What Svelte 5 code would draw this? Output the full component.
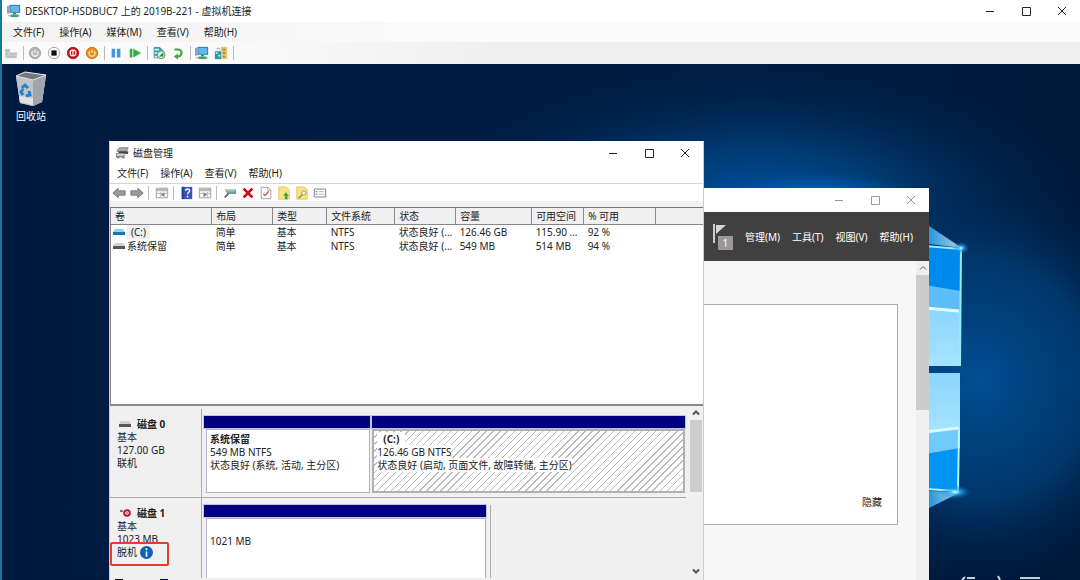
<script>
    const vmMenus = ['文件(F)', '操作(A)', '媒体(M)', '查看(V)', '帮助(H)']
    const diskMenus = ['文件(F)', '操作(A)', '查看(V)', '帮助(H)']
    const serverMenus = ['管理(M)', '工具(T)', '视图(V)', '帮助(H)']

    const vmTools = [
        ['keys'],
        ['turnoff', 'stop', 'shutdown', 'save'],
        ['pause', 'reset'],
        ['checkpoint', 'revert'],
        ['enhanced', 'share'],
        []
    ]
    const diskTools = [
        ['back', 'forward'],
        ['tree'],
        ['help', 'panel'],
        ['connect', 'delete', 'check', 'up', 'search', 'list']
    ]

    const columns = ['卷', '布局', '类型', '文件系统', '状态', '容量', '可用空间', '% 可用', '']
    const volumes = [
        { name: '(C:)', selected: true, cells: ['简单', '基本', 'NTFS', '状态良好 (...', '126.46 GB', '115.90 ...', '92 %', ''] },
        { name: '系统保留', selected: false, cells: ['简单', '基本', 'NTFS', '状态良好 (...', '549 MB', '514 MB', '94 %', ''] }
    ]

    const disks = [
        {
            name: '磁盘 0', size: '127.00 GB', status: '联机', offline: false,
            parts: [
                { title: '系统保留', size: '549 MB NTFS', status: '状态良好 (系统, 活动, 主分区)', share: 167 },
                { title: '(C:)', size: '126.46 GB NTFS', status: '状态良好 (启动, 页面文件, 故障转储, 主分区)', share: 314, active: true }
            ]
        },
        {
            name: '磁盘 1', size: '1023 MB', status: '脱机', offline: true,
            parts: [{ title: '', size: '1021 MB', status: '', share: 284 }]
        }
    ]
</script>

{#snippet icon(name)}
    <svg class="icon" viewBox="0 0 16 16" aria-hidden="true">
        {#if name === 'keys'}
            <path d="M1 3h6v4h8v7H1z" fill="#cfcfcf" />
            <path d="M2 4h4v3H2zM2 8h3v2H2zM7 8h3v2H7zM11 8h3v2h-3zM3 11h10v2H3z" fill="#bababa" />
        {:else if name === 'turnoff'}
            <circle cx="8" cy="8" r="6.5" fill="#b4b4b4" stroke="#a2a2a2" />
            <path d="M5.5 5.8a3.4 3.4 0 1 0 5 0M8 4v4" fill="none" stroke="#eee" stroke-width="1.4" />
        {:else if name === 'stop'}
            <circle cx="8" cy="8" r="6.5" fill="#fdfdfd" stroke="#9a9a9a" />
            <path d="M5 5h6v6H5z" fill="#111" />
        {:else if name === 'shutdown'}
            <circle cx="8" cy="8" r="6.5" fill="#c3191c" stroke="#a50d10" />
            <circle cx="8" cy="8" r="3.3" fill="none" stroke="#fff" stroke-width="1.3" />
            <path d="M8 5.5v5" stroke="#fff" stroke-width="1.3" />
        {:else if name === 'save'}
            <circle cx="8" cy="8" r="6.5" fill="#e88b17" stroke="#ca7208" />
            <path d="M5.5 6a3.4 3.4 0 1 0 5 0M8 4v4" fill="none" stroke="#ffe9b8" stroke-width="1.4" />
        {:else if name === 'pause'}
            <path d="M3 3h4v10H3zM9 3h4v10H9z" fill="#4a94da" />
        {:else if name === 'reset'}
            <path d="M2 3h3v10H2zM6 3l9 5-9 5z" fill="#35ae45" />
        {:else if name === 'checkpoint'}
            <path d="M2 1h7l4 4v9H2z" fill="#3f9dae" />
            <path d="M3 3h5v2H3zM3 7h3v2H3zM3 11h3v2H3z" fill="#c7eef0" />
            <circle cx="10.5" cy="10" r="4.5" fill="#dcece0" stroke="#558a65" />
            <path d="M8 12l5-5v5z" fill="#2c8c44" />
        {:else if name === 'revert'}
            <path d="M4 4h4a4 4 0 0 1 0 8H6" fill="none" stroke="#44a548" stroke-width="2.5" />
            <path d="M3 12l5-3.5v7z" fill="#44a548" />
        {:else if name === 'enhanced' || name === 'vm'}
            <path d="M3 1h12v9H3z" fill="#2374ad" />
            <path d="M4 2h10v7H4z" fill="#60b9e8" />
            <path d="M0 2h3v9H0z" fill="#8da2ac" />
            <path d="M7 10h3v2H7z" fill="#567" />
            <path d="M4 12h9v3H4z" fill="#39a668" />
            <path d="M1 13h3v1H1zM13 13h2v1h-2z" fill="#777" />
        {:else if name === 'share'}
            <path d="M8 1h7v14H8z" fill="#eac66e" />
            <path d="M10 3h3v2h-3zM10 7h3v2h-3zM10 11h3v2h-3z" fill="#a78337" />
            <path d="M1 6h7v9H1z" fill="#2d94ad" />
            <path d="M2 7h2v2H2zM5 10h2v2H5z" fill="#d3f0ea" />
            <path d="M3 4l2-2 2 2" fill="none" stroke="#3a9a5b" />
        {:else if name === 'back'}
            <path d="M1 8l6-5.5v3h8v5H7v3z" fill="#999" stroke="#777" />
        {:else if name === 'forward'}
            <path d="M15 8L9 2.500v3H1v5h8v3z" fill="#999" stroke="#777" />
        {:else if name === 'tree' || name === 'panel'}
            <path d="M1.500 2.500h13v11h-13z" fill="#fafafa" stroke="#969696" />
            <path d="M2 3h12v3H2z" fill="#b6b6b6" />
            <path d="M2 8.500h12M6.500 7v6M10.500 7v6" stroke="#aaa" />
            {#if name === 'tree'}
                <path d="M7 10l3-2v4z" fill="#666" />
            {:else}
                <path d="M10 10L7 8v4z" fill="#666" />
            {/if}
        {:else if name === 'help'}
            <path d="M2 1h12v14H2z" fill="#3c55b5" />
            <path d="M2 1h2v14H2z" fill="#23388b" />
            <path d="M6.500 5.500c0-3 4.500-2.500 4.500 0 0 1.800-2.300 1.700-2.300 4" fill="none" stroke="#fff" stroke-width="1.600" />
            <circle cx="8.700" cy="12" r="1" fill="#fff" />
        {:else if name === 'connect'}
            <path d="M2 4h13v5H5z" fill="#7b98a7" />
            <path d="M4 5h10v1H4z" fill="#c8dce3" />
            <path d="M6 9l-4 4" stroke="#4c6470" stroke-width="2" />
        {:else if name === 'delete'}
            <path d="M3 3l10 10M13 3L3 13" stroke="#c50d12" stroke-width="3.200" />
        {:else if name === 'check'}
            <path d="M2.500 1.500h8l3 3v10h-11z" fill="#fff" stroke="#999" />
            <path d="M10 1v4h4" fill="none" stroke="#aaa" />
            <path d="M5 9l2 2 4-5" fill="none" stroke="#d34949" stroke-width="1.500" />
        {:else if name === 'up' || name === 'search'}
            <path d="M2 1h8l4 3v11H2z" fill="#f6e681" stroke="#ddca65" />
            {#if name === 'up'}
                <path d="M10 7l4 4h-2v4H9v-4H7z" fill="#43a73b" />
            {:else}
                <circle cx="10" cy="8" r="2.500" fill="#fff8cd" stroke="#a89453" />
                <path d="M8 10l-4 4" stroke="#a89453" stroke-width="2" />
            {/if}
        {:else if name === 'list'}
            <path d="M1.500 3.500h13v9h-13z" fill="#fff" stroke="#777" />
            <path d="M3 6.500h2M3 9.500h2" stroke="#555" />
            <path d="M7 6.500h6M7 9.500h6" stroke="#aaa" />
        {:else if name === 'diskmgmt'}
            <path d="M5 2h10l-2 4H2z" fill="#a7b0b0" stroke="#777" />
            <path d="M4 6h11v3H4z" fill="#444" />
            <path d="M1 8h10v5H1z" fill="#888" />
            <path d="M2 9h8v2H2z" fill="#ddd" />
            <path d="M2 13h3v1H2zM8 13h3v1H8z" fill="#333" />
        {/if}
    </svg>
{/snippet}

{#snippet drive(color)}
    <svg class="drive" viewBox="0 0 12 8" aria-hidden="true">
        <path d="M2 1h8l2 3H0z" fill={color === 'blue' ? '#8ed3ef' : '#cfcfcf'} />
        <path d="M0 4h12v3H0z" fill={color === 'blue' ? '#1578ac' : '#565656'} />
    </svg>
{/snippet}

{#snippet controls()}
    <div class="controls">
        <button aria-label="最小化"><svg viewBox="0 0 10 10"><path d="M1 5.500h8" /></svg></button>
        <button aria-label="最大化"><svg viewBox="0 0 10 10"><path d="M1.500 1.500h8v8h-8z" /></svg></button>
        <button aria-label="关闭"><svg viewBox="0 0 10 10"><path d="M1 1l8 8M9 1L1 9" /></svg></button>
    </div>
{/snippet}

{#snippet menu(items)}
    <nav class="menu">
        {#each items as item}
            <button>{item}</button>
        {/each}
    </nav>
{/snippet}

{#snippet toolbar(groups)}
    <div class="toolbar">
        {#each groups as group, i}
            {#if i > 0}<span class="sep"></span>{/if}
            {#each group as name}
                <button aria-label={name}>{@render icon(name)}</button>
            {/each}
        {/each}
    </div>
{/snippet}

{#snippet chevron(down)}
    <svg class="chevron" viewBox="0 0 8 8" aria-hidden="true">
        <path d={down ? 'M1 2.500l3 3 3-3' : 'M1 5.500l3-3 3 3'} />
    </svg>
{/snippet}

<div class="vm">
    <header class="titlebar">
        {@render icon('vm')}
        <h1>DESKTOP-HSDBUC7 上的 2019B-221 - 虚拟机连接</h1>
        {@render controls()}
    </header>
    {@render menu(vmMenus)}
    {@render toolbar(vmTools)}

    <main class="desktop">
        <svg class="wallpaper" viewBox="2 64 1078 516" preserveAspectRatio="none" aria-hidden="true">
            <defs>
                <linearGradient id="base" x1="0" y1="0" x2="1" y2="0">
                    <stop offset="0" stop-color="#001b3f" />
                    <stop offset="0.35" stop-color="#001c42" />
                    <stop offset="0.7" stop-color="#001d42" />
                    <stop offset="1" stop-color="#001a3c" />
                </linearGradient>
                <radialGradient id="beam">
                    <stop offset="0" stop-color="#0055a8" />
                    <stop offset="0.4" stop-color="#00427e" stop-opacity="0.8" />
                    <stop offset="1" stop-color="#002550" stop-opacity="0" />
                </radialGradient>
                <radialGradient id="glow">
                    <stop offset="0" stop-color="#004f94" />
                    <stop offset="0.6" stop-color="#003d74" stop-opacity="0.8" />
                    <stop offset="1" stop-color="#002550" stop-opacity="0" />
                </radialGradient>
                <radialGradient id="peak">
                    <stop offset="0" stop-color="#0064cc" />
                    <stop offset="1" stop-color="#0055a8" stop-opacity="0" />
                </radialGradient>
                <radialGradient id="spark">
                    <stop offset="0" stop-color="#e8ffff" />
                    <stop offset="0.3" stop-color="#39bbff" stop-opacity="0.8" />
                    <stop offset="1" stop-color="#0070d0" stop-opacity="0" />
                </radialGradient>
                <linearGradient id="pane" x1="0" y1="0" x2="0" y2="1">
                    <stop offset="0" stop-color="#8ad6fd" />
                    <stop offset="1" stop-color="#a6e3ff" />
                </linearGradient>
                <linearGradient id="ray" x1="0" y1="0" x2="1" y2="0">
                    <stop offset="0" stop-color="#2fb0ff" />
                    <stop offset="1" stop-color="#d8fbff" />
                </linearGradient>
            </defs>
            <rect x="2" y="64" width="1078" height="516" fill="url(#base)" />
            <ellipse cx="760" cy="205" rx="330" ry="140" fill="url(#beam)" />
            <ellipse cx="980" cy="380" rx="190" ry="200" fill="url(#glow)" />
            <ellipse cx="820" cy="194" rx="90" ry="22" fill="url(#peak)" />
            <path d="M929 226l33 22-33-4z" fill="url(#ray)" opacity="0.8" />
            <path d="M925 246l36 3v117h-36z" fill="#0089ed" />
            <path d="M925 285l36 6v20l-36-3z" fill="#5dbdf8" />
            <path d="M925 308l36 3v55h-36z" fill="url(#pane)" />
            <path d="M925 308l34 3" stroke="#e3fbff" stroke-width="3" />
            <path d="M925 246l36 3-1 117" fill="none" stroke="#91ecff" stroke-width="2" />
            <path d="M925 373h35l-2 118-33-2z" fill="#0094f3" />
            <path d="M925 373h35v75l-35 6z" fill="#70cafa" />
            <path d="M925 373h35v55l-35 4z" fill="url(#pane)" />
            <path d="M925 432l33-4" stroke="#dffaff" stroke-width="3" />
            <path d="M925 489l33 2 1-63" fill="none" stroke="#b7f8ff" stroke-width="2" />
            <path d="M929 491l32 1-32 16z" fill="url(#ray)" opacity="0.8" />
            <ellipse cx="961" cy="248" rx="8" ry="6" fill="url(#spark)" />
            <ellipse cx="955" cy="492" rx="16" ry="7" fill="url(#spark)" />
            <path d="M965 577l-3 3M967 578h8M998 576l2 4M1020 578h20" stroke="#c5d2de" stroke-width="2" />
        </svg>

        <a href="#recycle" class="shortcut">
            <svg viewBox="0 0 32 36" aria-hidden="true">
                <path d="M1 5l9-4 21 3-4 27-9 4-13-3z" fill="#d2d6d9" />
                <path d="M1 5l17 4 13-5-4 27-9 4-13-3z" fill="#bfc4c8" />
                <path d="M18 9l13-5-4 27-9 4z" fill="#9fa6ac" />
                <path d="M1 5l9-4 21 3-13 5z" fill="#72797e" stroke="#e6e6e6" />
                <path d="M4 25l14 2v7L5 31z" fill="#e1e3e4" />
                <path d="M7 17l3-3 3 3M14 20l1 4-4 1M8 24l-2-3 2-3" fill="none" stroke="#1d84d3" stroke-width="3" />
            </svg>
            <span>回收站</span>
        </a>

        <section class="window server">
            <div class="titlebar">{@render controls()}</div>
            <div class="banner">
                <div class="flag">
                    <svg viewBox="0 0 14 20" aria-hidden="true">
                        <path d="M1 0h2v19H1z" fill="#ccc" />
                        <path d="M4 1h10L4 10z" fill="#d5d5d5" />
                    </svg>
                    <span class="badge">1</span>
                </div>
                {@render menu(serverMenus)}
            </div>
            <div class="server-body">
                <div class="welcome"><button>隐藏</button></div>
                <div class="scroll">
                    {@render chevron(false)}
                    <div class="thumb"></div>
                </div>
            </div>
        </section>

        <section class="window disk-window">
            <div class="titlebar">
                {@render icon('diskmgmt')}
                <h2>磁盘管理</h2>
                {@render controls()}
            </div>
            {@render menu(diskMenus)}
            {@render toolbar(diskTools)}

            <div class="volumes">
                <table>
                    <thead>
                        <tr>
                            {#each columns as column}
                                <th>{column}</th>
                            {/each}
                        </tr>
                    </thead>
                    <tbody>
                        {#each volumes as volume}
                            <tr>
                                <td class="volume">
                                    <div class="name">
                                        {@render drive(volume.selected ? 'blue' : 'gray')}
                                        <span class:selected={volume.selected}>{volume.name}</span>
                                    </div>
                                </td>
                                {#each volume.cells as cell}
                                    <td>{cell}</td>
                                {/each}
                            </tr>
                        {/each}
                    </tbody>
                </table>
            </div>

            <div class="graph">
                <div class="disks">
                    {#each disks as disk}
                        <div class="disk">
                            <div class="disk-info">
                                <div class="disk-name">
                                    {#if disk.offline}
                                        <svg class="drive" viewBox="0 0 12 8" aria-hidden="true">
                                            <path d="M1 1h3v2H1z" fill="#777" />
                                            <circle cx="8" cy="4" r="2.800" fill="#fff" stroke="#bd1738" stroke-width="2" />
                                            <path d="M8 3v2" stroke="#bd1738" />
                                        </svg>
                                    {:else}
                                        {@render drive('gray')}
                                    {/if}
                                    <b>{disk.name}</b>
                                </div>
                                <p>基本</p>
                                <p>{disk.size}</p>
                                <p class="status" class:marked={disk.offline}>
                                    {disk.status}
                                    {#if disk.offline}
                                        <svg class="info" viewBox="0 0 12 12" aria-hidden="true">
                                            <circle cx="6" cy="6" r="6" fill="#0d62b3" />
                                            <path d="M6 2v2M6 5v5" stroke="#fff" stroke-width="1.500" />
                                        </svg>
                                    {/if}
                                </p>
                            </div>
                            <div class="parts">
                                {#each disk.parts as part}
                                    <div class="part" class:active={part.active} class:raw={disk.offline} style="width: {part.share / 484 * 100}%">
                                        <div class="part-bar"></div>
                                        <div class="part-body">
                                            <p><b>{part.title}</b></p>
                                            <p><span>{part.size}</span></p>
                                            <p><span>{part.status}</span></p>
                                        </div>
                                    </div>
                                {/each}
                            </div>
                        </div>
                    {/each}
                </div>
                <div class="scroll">
                    {@render chevron(false)}
                    <div class="thumb"></div>
                    {@render chevron(true)}
                </div>
            </div>
            <div class="legend"><i></i><i></i></div>
        </section>
    </main>
</div>

<style>
    :global(body) {
        margin: 0;
    }
    .vm {
        display: flex;
        flex-direction: column;
        box-sizing: border-box;
        height: 100vh;
        border-left: 2px solid #14799c;
        overflow: hidden;
        background: #fff;
        color: #222;
        font-family: "Noto Sans", "Noto Sans CJK SC", sans-serif;
        font-size: 10px;
        line-height: 14px;
    }
    button {
        margin: 0;
        padding: 0;
        border: 0;
        background: none;
        color: inherit;
        font: inherit;
        white-space: nowrap;
    }
    h1, h2, p {
        margin: 0;
        font-size: 10px;
        font-weight: normal;
    }
    svg {
        display: block;
    }
    .icon {
        flex: none;
        width: 14px;
        height: 14px;
    }
    .titlebar {
        display: flex;
        flex: none;
        align-items: center;
        gap: 4px;
        height: 22px;
        padding-left: 5px;
        background: #fff;
    }
    .controls {
        display: flex;
        margin-left: auto;
    }
    .controls button {
        display: flex;
        justify-content: center;
        width: 36px;
    }
    .controls svg {
        width: 10px;
        height: 10px;
        fill: none;
        stroke: #222;
    }
    .menu {
        display: flex;
        flex: none;
        align-items: center;
        gap: 12px;
        height: 20px;
        padding-left: 7px;
    }
    .vm > .menu {
        gap: 15px;
        padding-left: 11px;
        background: linear-gradient(90deg, #f2f2f2, #fafafa 40%);
    }
    .toolbar {
        display: flex;
        flex: none;
        align-items: center;
        gap: 4px;
        height: 17px;
        padding-left: 2px;
    }
    .toolbar button {
        width: 14px;
    }
    .sep {
        width: 1px;
        height: 14px;
        margin-right: 2px;
        background: #bbb;
    }
    .vm > .toolbar {
        height: 22px;
        padding-left: 2px;
        background: linear-gradient(90deg, #fafafa 20%, #eee 50%);
    }
    .vm > .toolbar button {
        width: 15px;
    }
    .vm > .toolbar .sep {
        margin: 0;
    }
    .desktop {
        position: relative;
        flex: 1;
        min-height: 0;
        overflow: hidden;
    }
    .wallpaper {
        width: 100%;
        height: 100%;
    }
    .shortcut {
        position: absolute;
        top: 7px;
        left: 8px;
        display: flex;
        flex-direction: column;
        align-items: center;
        gap: 2px;
        width: 42px;
        color: #fff;
        text-decoration: none;
    }
    .shortcut svg {
        width: 32px;
        height: 36px;
    }
    .window {
        position: absolute;
        display: flex;
        flex-direction: column;
        box-sizing: border-box;
        background: #fff;
    }
    .server {
        top: 124px;
        left: 400px;
        width: 527px;
        height: 420px;
    }
    .server .titlebar {
        height: 24px;
    }
    .server .controls svg {
        stroke: #999;
    }
    .banner {
        display: flex;
        flex: none;
        align-items: center;
        justify-content: flex-end;
        gap: 12px;
        height: 49px;
        padding-right: 16px;
        background: #404040;
        color: #fff;
    }
    .flag {
        position: relative;
        width: 21px;
        height: 26px;
    }
    .flag svg {
        width: 14px;
        height: 20px;
    }
    .badge {
        position: absolute;
        right: 0;
        bottom: 0;
        width: 15px;
        background: #999;
        text-align: center;
    }
    .banner .menu {
        padding: 0;
    }
    .server-body {
        display: flex;
        flex: 1;
        gap: 18px;
        min-height: 0;
        background: #f7f7f7;
    }
    .welcome {
        display: flex;
        flex: 1;
        align-items: flex-end;
        justify-content: flex-end;
        box-sizing: border-box;
        height: 221px;
        margin-top: 43px;
        padding: 15px;
        border: 1px solid #aaa;
        background: #fff;
    }
    .scroll {
        display: flex;
        flex: none;
        flex-direction: column;
        align-items: center;
        width: 13px;
        background: #f0f0f0;
    }
    .chevron {
        flex: none;
        width: 8px;
        height: 14px;
        fill: none;
        stroke: #555;
    }
    .disk-window .chevron {
        stroke-width: 2;
    }
    .thumb {
        width: 100%;
        height: 135px;
        background: #cdcdcd;
    }
    .disk-window {
        top: 77px;
        left: 107px;
        width: 595px;
        height: 460px;
        border: 1px solid #ccc;
        border-top-color: #fff;
    }
    .disk-window .titlebar {
        height: 21px;
    }
    .disk-window .toolbar {
        border-top: 1px solid #d5d5d5;
        border-bottom: 6px solid #f0f0f0;
    }
    .volumes {
        flex: none;
        height: 196px;
        border-top: 1px solid #777;
        border-bottom: 2px solid #888;
        border-left: 1px solid #888;
        overflow: hidden;
    }
    table {
        width: 100%;
        border-collapse: collapse;
        table-layout: fixed;
    }
    th, td {
        box-sizing: border-box;
        width: 17%;
        height: 14px;
        padding: 0 0 0 4px;
        font-weight: normal;
        text-align: left;
        white-space: nowrap;
        overflow: hidden;
    }
    th {
        height: 16px;
        border-right: 1px solid #888;
        border-bottom: 1px solid #888;
        background: #f0f0f0;
    }
    th:nth-child(2), th:nth-child(5) {
        width: 61px;
    }
    th:nth-child(3) {
        width: 54px;
    }
    th:nth-child(4) {
        width: 68px;
    }
    th:nth-child(6) {
        width: 76px;
    }
    th:nth-child(7) {
        width: 52px;
    }
    th:nth-child(8) {
        width: 72px;
    }
    th:last-child {
        width: 8%;
        border-right: 0;
    }
    .volume {
        padding-left: 2px;
    }
    .name {
        display: flex;
        align-items: center;
        gap: 2px;
    }
    .drive {
        flex: none;
        width: 12px;
        height: 8px;
    }
    .selected {
        padding: 0 4px;
        background: #f0f0f0;
    }
    .graph {
        display: flex;
        flex: none;
        height: 172px;
        background: #f0f0f0;
    }
    .graph .scroll {
        width: 12px;
        margin-right: 1px;
    }
    .graph .thumb {
        height: 72px;
        margin-bottom: auto;
    }
    .disks {
        flex: 1;
        min-width: 0;
        padding-top: 3px;
        padding-right: 4px;
        overflow: hidden;
    }
    .disk {
        display: flex;
        box-sizing: border-box;
        height: 89px;
        border-bottom: 1px solid #aaa;
    }
    .disk-info {
        flex: none;
        box-sizing: border-box;
        width: 92px;
        padding-top: 8px;
        padding-left: 7px;
        border-right: 1px solid #aaa;
        line-height: 13px;
    }
    .disk-name {
        display: flex;
        align-items: center;
        gap: 6px;
        height: 14px;
        padding-left: 2px;
    }
    .status {
        display: flex;
        align-items: center;
        gap: 3px;
    }
    .info {
        width: 13px;
        height: 13px;
    }
    .marked {
        position: relative;
    }
    .marked::after {
        content: "";
        position: absolute;
        top: -4px;
        left: -7px;
        width: 55px;
        height: 20px;
        border: 2px solid #e63b31;
        border-radius: 2px;
    }
    .parts {
        display: flex;
        flex: 1;
        gap: 2px;
        padding: 7px 0 4px 2px;
    }
    .part {
        display: flex;
        flex-direction: column;
        box-sizing: border-box;
    }
    .part-bar {
        height: 12px;
        margin-bottom: 1px;
        background: #000080;
        outline: 1px solid #c4c4e4;
    }
    .part-body {
        flex: 1;
        box-sizing: border-box;
        margin-left: 2px;
        padding: 3px 0 0 3px;
        border: 1px solid #b4b4c8;
        background: #fff;
        line-height: 13px;
    }
    .part-body p {
        height: 13px;
        white-space: nowrap;
    }
    .active .part-body {
        margin-left: 0;
        padding: 2px 0 0 3px;
        border: 2px solid #b0b0b0;
        background: repeating-linear-gradient(135deg, #fff 0 4px, #bbb 4px 5px);
    }
    .active b {
        padding: 0 6px;
        background: #fff;
    }
    .active .part-body span {
        background: #fff;
    }
    .raw {
        padding-right: 1px;
        box-shadow: 3px 0 #f0f0f0, 4px 0 #aaa;
    }
    .raw .part-body {
        padding-top: 16px;
    }
    .raw .part-body p:first-child {
        display: none;
    }
    .legend {
        display: flex;
        gap: 37px;
        padding: 1px 5px;
        background: #f0f0f0;
    }
    .legend i {
        width: 8px;
        height: 8px;
        background: #111;
    }
    .legend i + i {
        background: #000080;
    }
</style>
